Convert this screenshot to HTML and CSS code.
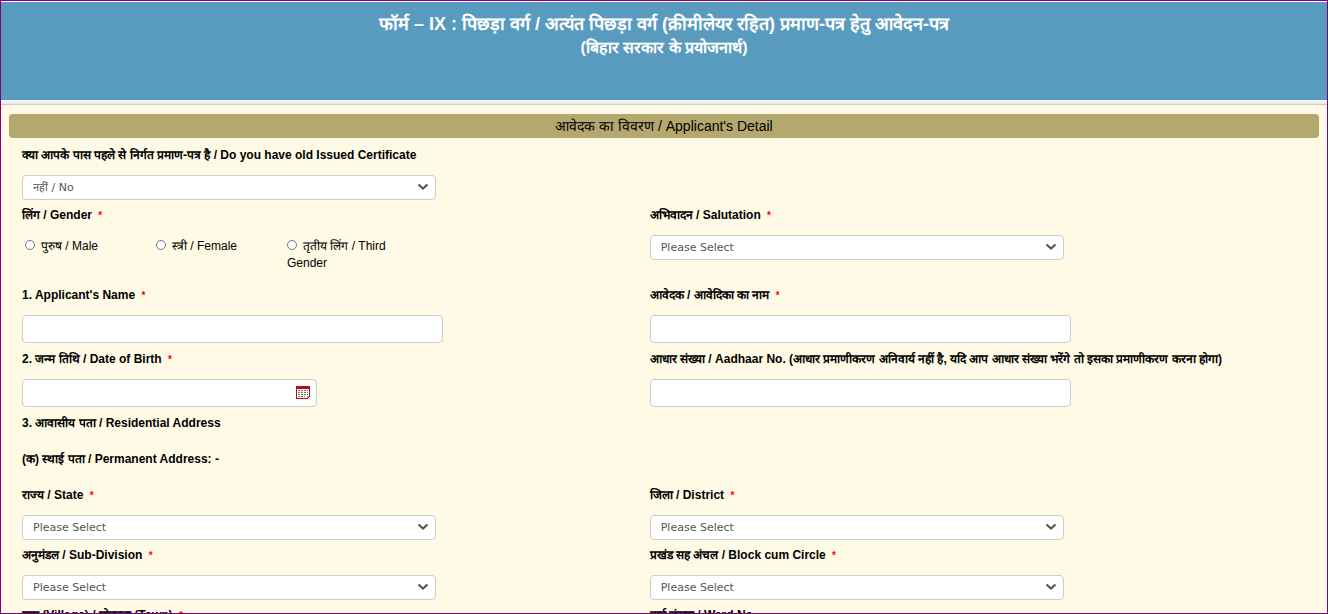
FILE: index.html
```
<!DOCTYPE html>
<html lang="hi">
<head>
  <meta charset="UTF-8">
  <title>फॉर्म – IX : आवेदन-पत्र</title>
  <meta name="viewport" content="width=device-width, initial-scale=1.0">
  <link rel="stylesheet" href="styles.css">
</head>
<body>
  <svg width="0" height="0" class="sprite" aria-hidden="true">
    <symbol id="chevron" viewBox="0 0 12 8">
      <path d="M1.5 1.5 L6 5.5 L10.5 1.5" fill="none" stroke="#555" stroke-width="2.2"/>
    </symbol>
  </svg>

  <header>
    <h1>फॉर्म – IX : पिछड़ा वर्ग / अत्यंत पिछड़ा वर्ग (क्रीमीलेयर रहित) प्रमाण-पत्र हेतु आवेदन-पत्र</h1>
    <p>(बिहार सरकार के प्रयोजनार्थ)</p>
  </header>

  <form class="panel" id="applicationForm">
    <h2>आवेदक का विवरण / Applicant's Detail</h2>

    <div class="row">
      <div class="field has-select">
        <label for="oldCert">क्या आपके पास पहले से निर्गत प्रमाण-पत्र है / Do you have old Issued Certificate</label>
        <div class="select">
          <select id="oldCert"><option>नहीं / No</option><option>हाँ / Yes</option></select>
          <svg><use href="#chevron"/></svg>
        </div>
      </div>
    </div>

    <div class="row row-gender">
      <div class="field" role="radiogroup" aria-labelledby="genderLabel">
        <div class="label" id="genderLabel">लिंग / Gender <span class="req">*</span></div>
        <div class="options">
          <label><input type="radio" name="gender" value="M">पुरुष / Male</label>
          <label><input type="radio" name="gender" value="F">स्त्री / Female</label>
          <label><input type="radio" name="gender" value="T">तृतीय लिंग / Third Gender</label>
        </div>
      </div>
      <div class="field has-select">
        <label for="salutation">अभिवादन / Salutation <span class="req">*</span></label>
        <div class="select">
          <select id="salutation"><option>Please Select</option></select>
          <svg><use href="#chevron"/></svg>
        </div>
      </div>
    </div>

    <div class="row">
      <div class="field">
        <label for="nameEn">1. Applicant's Name <span class="req">*</span></label>
        <input type="text" id="nameEn">
      </div>
      <div class="field">
        <label for="nameHi">आवेदक / आवेदिका का नाम <span class="req">*</span></label>
        <input type="text" id="nameHi">
      </div>
    </div>

    <div class="row">
      <div class="field">
        <label for="dob">2. जन्म तिथि / Date of Birth <span class="req">*</span></label>
        <div class="date">
          <input type="text" id="dob">
          <button type="button" aria-label="Choose date">
            <svg width="14" height="13" viewBox="0 0 14 13" shape-rendering="crispEdges">
              <path d="M0 0H14V10L11 13H0Z" fill="#b01010"/>
              <path d="M1 3H13V10H11V12H1Z" fill="#fff"/>
              <path d="M2 4H12M2 6H12M2 8H12M2 10H9" transform="translate(0 .5)" stroke="#777" stroke-dasharray="2 1"/>
              <path d="M11 10H13L11 12Z" fill="#e88"/>
            </svg>
          </button>
        </div>
      </div>
      <div class="field">
        <label for="aadhaar">आधार संख्या / Aadhaar No. (आधार प्रमाणीकरण अनिवार्य नहीं है, यदि आप आधार संख्या भरेंगे तो इसका प्रमाणीकरण करना होगा)</label>
        <input type="text" id="aadhaar">
      </div>
    </div>

    <h3>3. आवासीय पता / Residential Address</h3>
    <h3>(क) स्थाई पता / Permanent Address: -</h3>

    <div class="row">
      <div class="field has-select">
        <label for="state">राज्य / State <span class="req">*</span></label>
        <div class="select">
          <select id="state"><option>Please Select</option></select>
          <svg><use href="#chevron"/></svg>
        </div>
      </div>
      <div class="field has-select">
        <label for="district">जिला / District <span class="req">*</span></label>
        <div class="select">
          <select id="district"><option>Please Select</option></select>
          <svg><use href="#chevron"/></svg>
        </div>
      </div>
    </div>

    <div class="row">
      <div class="field has-select">
        <label for="subdivision">अनुमंडल / Sub-Division <span class="req">*</span></label>
        <div class="select">
          <select id="subdivision"><option>Please Select</option></select>
          <svg><use href="#chevron"/></svg>
        </div>
      </div>
      <div class="field has-select">
        <label for="block">प्रखंड सह अंचल / Block cum Circle <span class="req">*</span></label>
        <div class="select">
          <select id="block"><option>Please Select</option></select>
          <svg><use href="#chevron"/></svg>
        </div>
      </div>
    </div>

    <div class="row">
      <div class="field">
        <label for="village">ग्राम (Village) / मोहल्ला (Town) <span class="req">*</span></label>
        <input type="text" id="village">
      </div>
      <div class="field">
        <label for="ward">वार्ड संख्या / Ward No.</label>
        <input type="text" id="ward">
      </div>
    </div>
  </form>
</body>
</html>
```
FILE: styles.css
```
:root {
  --bg: #fffae5;
  --header: #599bbf;
  --bar: #b5a86e;
  --frame: #800080;
  --border: #ccc;
}

* {
  box-sizing: border-box;
}

body {
  margin: 0;
  height: 100vh;
  overflow: hidden;
  border: 1px solid var(--frame);
  background: var(--bg);
  color: #000;
  font-family: "Liberation Sans", Arial, sans-serif;
  font-size: 12px;
}

.sprite {
  position: absolute;
}

header {
  height: 104px;
  padding-top: 10px;
  border-top: 1px solid #fff;
  border-bottom: 1px solid #ccc;
  background: linear-gradient(var(--header) 98px, #fafafa 98px, #e4e4e4 102px);
  color: #fff;
  font-weight: bold;
  text-align: center;
}

h1,
header p {
  margin: 0;
  font-size: 18px;
  line-height: 24px;
}

header p {
  font-size: 16px;
}

.panel {
  margin: 9px 8px 0;
}

h2 {
  margin: 0 0 5px;
  height: 24px;
  line-height: 24px;
  font-size: 14px;
  font-weight: normal;
  text-align: center;
  background: var(--bar);
  border-radius: 4px;
}

.row {
  display: grid;
  grid-template-columns: 23fr 25fr;
}

.row-gender {
  min-height: 80px;
}

.field {
  padding: 4px 0 4px 13px;
}

.has-select {
  padding-bottom: 3px;
}

.field > label,
.field > .label {
  display: block;
  height: 16px;
  margin-bottom: 12px;
  line-height: 16px;
  font-weight: bold;
  white-space: nowrap;
}

.req {
  margin-left: 3px;
  font-size: 10px;
  color: #f00;
}

h3 {
  margin: 0;
  padding: 4px 0 16px 13px;
  height: 36px;
  line-height: 16px;
  font-size: 12px;
  font-weight: bold;
}

input[type="text"] {
  display: block;
  width: 421px;
  max-width: 100%;
  height: 28px;
  padding: 4px 10px;
  border: 1px solid var(--border);
  border-radius: 4px;
  background: #fff;
}

.select {
  position: relative;
  width: 414px;
  max-width: 100%;
}

.select select {
  display: block;
  appearance: none;
  width: 100%;
  height: 25px;
  padding: 0 30px 0 10px;
  border: 1px solid var(--border);
  border-radius: 4px;
  background: #fff;
  color: #555;
  font-family: Verdana, "DejaVu Sans", sans-serif;
  font-size: 11px;
}

.select svg {
  position: absolute;
  top: 8px;
  right: 7px;
  width: 12px;
  height: 8px;
  pointer-events: none;
}

.options {
  display: grid;
  grid-template-columns: repeat(3, 131px);
  padding-top: 3px;
  line-height: 17px;
}

.options label {
  padding-left: 3px;
}

.options input {
  width: 10px;
  height: 10px;
  margin: 0 6px 0 0;
}

.date {
  position: relative;
  width: 295px;
  max-width: 100%;
}

.date input[type="text"] {
  width: 100%;
  padding-right: 30px;
}

.date button {
  position: absolute;
  top: 7px;
  right: 7px;
  padding: 0;
  border: 0;
  background: none;
  line-height: 0;
  cursor: pointer;
}
```
